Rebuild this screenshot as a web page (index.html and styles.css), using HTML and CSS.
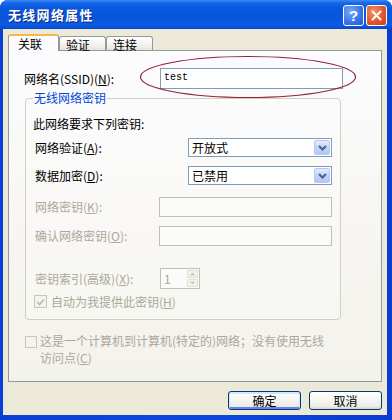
FILE: index.html
```html
<!DOCTYPE html>
<html lang="zh-CN">
<head>
<meta charset="utf-8">
<title>无线网络属性</title>
<link rel="stylesheet" href="styles.css">
</head>
<body>
<div class="window">
  <div class="titlebar">
    <span class="title">无线网络属性</span>
    <div class="tbtns">
      <span class="tbtn help">?</span>
      <span class="tbtn close"><svg width="11" height="11" viewBox="0 0 11 11"><path d="M1.5 1.5 L9.5 9.5 M9.5 1.5 L1.5 9.5" stroke="#fff" stroke-width="2" stroke-linecap="round"/></svg></span>
    </div>
  </div>
  <div class="client">
    <div class="tabs">
      <div class="tab active">关联</div>
      <div class="tab">验证</div>
      <div class="tab">连接</div>
    </div>
    <div class="panel">
      <div class="ssid-row">
        <span class="ssid-label">网络名(SSID)(<u>N</u>):</span>
        <div class="ssid-input">test</div>
      </div>
      <svg class="ellipse" width="222" height="46" viewBox="0 0 222 46"><ellipse cx="110" cy="23" rx="107.5" ry="20.5" fill="none" stroke="#8E2436" stroke-width="1.2"/></svg>
      <fieldset class="group">
        <legend>无线网络密钥</legend>
        <div class="row r1">此网络要求下列密钥:</div>
        <div class="row r2">
          <span class="lbl">网络验证(<u>A</u>):</span>
          <div class="select"><span class="val">开放式</span><span class="drop"><svg width="9" height="6" viewBox="0 0 9 6"><path d="M1 1 L4.5 4.5 L8 1" fill="none" stroke="#4D6185" stroke-width="2"/></svg></span></div>
        </div>
        <div class="row r3">
          <span class="lbl">数据加密(<u>D</u>):</span>
          <div class="select"><span class="val">已禁用</span><span class="drop"><svg width="9" height="6" viewBox="0 0 9 6"><path d="M1 1 L4.5 4.5 L8 1" fill="none" stroke="#4D6185" stroke-width="2"/></svg></span></div>
        </div>
        <div class="row r4">
          <span class="lbl dis">网络密钥(<u>K</u>):</span>
          <div class="dinput"></div>
        </div>
        <div class="row r5">
          <span class="lbl dis">确认网络密钥(<u>O</u>):</span>
          <div class="dinput"></div>
        </div>
        <div class="row r6">
          <span class="lbl dis">密钥索引(高级)(<u>X</u>):</span>
          <div class="spin"><span class="val">1</span><span class="arrows"><span class="arr"><svg width="7" height="4" viewBox="0 0 7 4"><path d="M0.5 3.5 L3.5 0.5 L6.5 3.5 Z" fill="#C9C7BA"/></svg></span><span class="arr"><svg width="7" height="4" viewBox="0 0 7 4"><path d="M0.5 0.5 L3.5 3.5 L6.5 0.5 Z" fill="#C9C7BA"/></svg></span></span></div>
        </div>
        <div class="row r7">
          <span class="chk checked"><svg width="9" height="8" viewBox="0 0 9 8"><path d="M1 4 L3.5 6.5 L8 1.5" fill="none" stroke="#BDBAAC" stroke-width="1.6"/></svg></span>
          <span class="dis">自动为我提供此密钥(<u>H</u>)</span>
        </div>
      </fieldset>
      <div class="adhoc">
        <span class="chk"></span>
        <span class="dis adhoc-text"><span class="line">这是一个计算机到计算机(特定的)网络；没有使用无线</span><span class="line">访问点(<u>C</u>)</span></span>
      </div>
    </div>
    <div class="buttons">
      <div class="btn default">确定</div>
      <div class="btn">取消</div>
    </div>
  </div>
</div>
</body>
</html>
```

FILE: styles.css
```css
* { box-sizing: border-box; }
html, body { margin: 0; padding: 0; }
body {
  width: 392px;
  height: 420px;
  overflow: hidden;
  background: #fff;
  font-family: "Noto Sans CJK SC", "Noto Sans", sans-serif;
  font-size: 12px;
  color: #000;
}
u { text-decoration: underline; text-underline-offset: 1px; }

.window {
  width: 392px;
  height: 420px;
  display: flex;
  flex-direction: column;
  background: linear-gradient(to right, #0A3FD6, #0B48E0 50%, #0A3CD2);
  border-radius: 8px 8px 0 0;
  overflow: hidden;
}

.titlebar {
  flex: none;
  height: 29px;
  display: flex;
  align-items: center;
  justify-content: space-between;
  padding: 0 5px 0 8px;
  background: linear-gradient(to bottom, #3A8BF4 0px, #1466E8 3px, #0A58DD 8px, #0A55DA 18px, #0B5CE4 25px, #0846C9 29px);
}
.title {
  color: #fff;
  font-weight: bold;
  font-size: 13px;
  letter-spacing: 1.3px;
  line-height: 16px;
  text-shadow: 1px 1px 0 #0B2A86;
}
.tbtns { display: flex; gap: 2px; margin-top: 1px; }
.tbtn {
  width: 21px;
  height: 21px;
  border: 1px solid #fff;
  border-radius: 3px;
  display: flex;
  align-items: center;
  justify-content: center;
}
.help {
  background: radial-gradient(circle at 35% 30%, #7BAAF8, #3A78EC 55%, #1F56D4);
  color: #fff;
  font-family: "Liberation Sans", sans-serif;
  font-weight: bold;
  font-size: 15px;
  line-height: 1;
}
.close {
  background: radial-gradient(circle at 35% 30%, #F0936D, #E2582E 55%, #C5401E);
}

.client {
  flex: 1;
  margin: 0 5px 5px 3px;
  background: #ECE9D8;
  padding: 5px 5px 0 5px;
  display: flex;
  flex-direction: column;
}

.tabs {
  display: flex;
  align-items: flex-end;
  height: 17px;
  margin-bottom: -1px;
  position: relative;
  z-index: 1;
}
.tab {
  width: 47px;
  height: 14px;
  margin-bottom: 1px;
  border: 1px solid #919B9C;
  border-bottom: none;
  border-radius: 3px 3px 0 0;
  background: linear-gradient(#FFFFFF, #F3F2EE 60%, #E6E4DA);
  padding: 1px 0 0 6px;
  line-height: 14px;
  white-space: nowrap;
}
.tab.active {
  width: 51px;
  height: 17px;
  margin-bottom: 0;
  background: #FCFCFE;
  border-top: 2px solid #F5B945;
  padding: 1px 0 0 9px;
}

.panel {
  position: relative;
  height: 332px;
  border: 1px solid #919B9C;
  background: linear-gradient(#FCFCFE, #F6F5F1 60%, #F3F2EC);
  padding: 17px 15px 0 15px;
}

.ssid-row { display: flex; align-items: center; height: 21px; }
.ssid-label { width: 136px; line-height: 14px; white-space: nowrap; }
.ssid-input {
  width: 183px;
  height: 21px;
  border: 1px solid #7F9DB9;
  background: #fff;
  font-family: "Liberation Mono", monospace;
  font-size: 10px;
  line-height: 18px;
  padding-left: 3px;
}
.ellipse { position: absolute; left: 129px; top: 3px; }

.group {
  margin: 2px 0 0 1px;
  width: 316px;
  border: 1px solid #D0D0BF;
  border-radius: 4px;
  padding: 12px 8px 11px 8px;
  min-width: 0;
  background: rgba(255, 255, 255, 0.25);
}
.group legend {
  padding: 0 1px;
  margin-left: -1px;
  color: #0046D5;
  line-height: 14px;
}

.row { display: flex; align-items: center; justify-content: space-between; white-space: nowrap; }
.lbl { padding-left: 1px; line-height: 14px; }
.dis { color: #ACA899; }
.r1 { height: 14px; line-height: 14px; margin-left: -1px; }
.r2 { height: 19px; margin-top: 7px; }
.r3 { height: 19px; margin-top: 9px; }
.r4 { height: 20px; margin-top: 12px; }
.r5 { height: 20px; margin-top: 9px; }
.r6 { height: 21px; margin-top: 22px; justify-content: flex-start; }
.r6 .lbl { width: 126px; }
.r7 { height: 13px; margin-top: 6px; justify-content: flex-start; gap: 4px; line-height: 14px; }

.select {
  width: 144px;
  height: 19px;
  border: 1px solid #7F9DB9;
  background: #fff;
  display: flex;
}
.select .val { flex: 1; padding-left: 3px; line-height: 17px; }
.drop {
  width: 16px;
  margin: 1px;
  border: 1px solid #B5C7F2;
  border-radius: 2px;
  background: linear-gradient(#E3EBFD, #C3D4FA 50%, #B2C6F4);
  display: flex;
  align-items: center;
  justify-content: center;
}

.dinput {
  width: 173px;
  height: 20px;
  border: 1px solid #C2C0B2;
  background: #FBFBF9;
}

.spin {
  width: 40px;
  height: 21px;
  border: 1px solid #C2C0B2;
  background: #FBFBF9;
  display: flex;
}
.spin .val { flex: 1; color: #ACA899; padding-left: 3px; line-height: 19px; }
.arrows { width: 13px; display: flex; flex-direction: column; gap: 1px; padding: 1px; }
.arr {
  flex: 1;
  border: 1px solid #E0DED3;
  border-radius: 1px;
  background: #F4F3EE;
  display: flex;
  align-items: center;
  justify-content: center;
}

.chk {
  flex: none;
  width: 13px;
  height: 13px;
  border: 1px solid #C9C7BA;
  background: #F4F3EE;
  display: flex;
  align-items: center;
  justify-content: center;
}

.adhoc {
  display: flex;
  align-items: flex-start;
  gap: 3px;
  margin: 12px 0 0 1px;
}
.adhoc .chk { width: 12px; height: 12px; margin-top: 4px; }
.adhoc-text { display: flex; flex-direction: column; white-space: nowrap; }
.adhoc-text .line { display: block; line-height: 18px; height: 18px; }
.adhoc-text .line + .line { margin-top: -1px; }

.buttons {
  display: flex;
  justify-content: flex-end;
  gap: 8px;
  margin-top: 9px;
}
.btn {
  width: 73px;
  height: 19px;
  border: 1px solid #003C74;
  border-radius: 3px;
  background: linear-gradient(#FFFFFF, #F4F4F0 50%, #ECEBE6 85%, #D6D0C5);
  display: flex;
  align-items: center;
  justify-content: center;
  line-height: 14px;
}
.btn.default {
  box-shadow: inset 0 1px 0 1px #CEE7FF, inset 0 -1px 0 1px #6982EE;
}
```
